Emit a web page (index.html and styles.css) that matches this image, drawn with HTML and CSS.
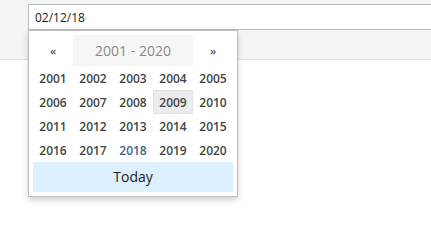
FILE: index.html
```html
<!DOCTYPE html>
<html lang="en">
<head>
  <meta charset="UTF-8">
  <title>Datepicker - decades</title>
  <link rel="stylesheet" href="styles.css">
</head>
<body>
  <div class="toolbar">
    <input class="date-input" type="text" value="02/12/18">
  </div>

  <div class="datepicker">
    <div class="dp-head">
      <span class="dp-nav">&laquo;</span>
      <span class="dp-title">2001 - 2020</span>
      <span class="dp-nav">&raquo;</span>
    </div>
    <div class="dp-years">
      <span class="year">2001</span>
      <span class="year">2002</span>
      <span class="year">2003</span>
      <span class="year">2004</span>
      <span class="year">2005</span>
      <span class="year">2006</span>
      <span class="year">2007</span>
      <span class="year">2008</span>
      <span class="year focused">2009</span>
      <span class="year">2010</span>
      <span class="year">2011</span>
      <span class="year">2012</span>
      <span class="year">2013</span>
      <span class="year">2014</span>
      <span class="year">2015</span>
      <span class="year">2016</span>
      <span class="year">2017</span>
      <span class="year current">2018</span>
      <span class="year">2019</span>
      <span class="year">2020</span>
    </div>
    <div class="dp-today">Today</div>
  </div>
</body>
</html>
```

FILE: styles.css
```css
/* Page + input bar */
body {
  font-family: "Open Sans", "Liberation Sans", sans-serif;
  background-color: #fff;
  margin: 0;
  overflow: hidden;
}

.toolbar {
  height: 55px;
  padding: 4px 0 0 28px;
  background-color: #f4f4f4;
  border-bottom: 1px solid #e2e2e2;
}

.date-input {
  display: block;
  box-sizing: border-box;
  width: 420px;
  height: 26px;
  margin: 0;
  padding: 0 6px;
  font-family: inherit;
  font-size: 12px;
  color: #222;
  background-color: #fff;
  border: 1px solid #bcbcbc;
  border-radius: 0;
  outline: none;
}

/* Dropdown calendar, sits over the page */
.datepicker {
  position: absolute;
  top: 30px;
  left: 28px;
  width: 200px;
  padding: 4px;
  background-color: #fff;
  border: 1px solid #bdbdbd;
  box-shadow: 0 3px 6px rgba(0, 0, 0, 0.18);
}

.dp-head {
  display: grid;
  grid-template-columns: 40px 120px 40px;
  height: 31px;
}

.dp-nav,
.dp-title {
  display: flex;
  align-items: center;
  justify-content: center;
}

.dp-nav {
  font-size: 11px;
  font-weight: 600;
  color: #555;
}

.dp-title {
  font-size: 14px;
  color: #888;
  background-color: #f6f6f6;
}

.dp-years {
  display: grid;
  grid-template-columns: repeat(5, 40px);
  grid-auto-rows: 24px;
}

.year {
  display: flex;
  align-items: center;
  justify-content: center;
  font-size: 12px;
  font-weight: 600;
  color: #444;
}

.year.focused {
  background-color: #ececec;
  box-shadow: inset 0 0 0 1px #e2e2e2;
}

.year.current {
  color: #3e6386;
}

.dp-today {
  height: 30px;
  line-height: 30px;
  text-align: center;
  font-size: 14px;
  color: #222;
  background-color: #ddf0ff;
}
```
